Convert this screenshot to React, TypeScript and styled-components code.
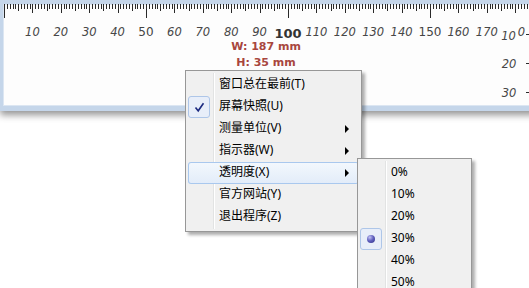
import React from "react";
import styled, { createGlobalStyle, css } from "styled-components";

const Global = createGlobalStyle`
  html, body { margin: 0; padding: 0; background: #ffffff; overflow: hidden; }
  #root { width: 529px; height: 288px; }
`;

const Page = styled.div`
  position: relative;
  width: 529px;
  height: 288px;
  overflow: hidden;
  background: #ffffff;
`;

const RulerWindow = styled.div`
  position: relative;
  width: 548px;
  height: 111px;
  box-sizing: border-box;
  border-style: solid;
  border-color: #c5d6ea;
  border-width: 4px 3px 5px 3px;
  background: #fdfdfd;
  box-shadow: inset 0 0 0 1px #dce6f2, 0 4px 7px rgba(0, 0, 0, 0.42);
`;

const RulerCanvas = styled.svg`
  display: block;
  width: 542px;
  height: 102px;
`;

const Readout = styled.div`
  position: absolute;
  left: 263px;
  top: 35px;
  transform: translateX(-50%);
  display: flex;
  flex-direction: column;
  align-items: center;
  font-family: "DejaVu Sans", Verdana, sans-serif;
  font-weight: bold;
  font-size: 11px;
  line-height: 16px;
  color: #a8463d;
  white-space: nowrap;
`;

const Menu = styled.div<{ $left: number; $top: number; $width: number }>`
  position: absolute;
  left: ${(p) => p.$left}px;
  top: ${(p) => p.$top}px;
  width: ${(p) => p.$width}px;
  box-sizing: border-box;
  padding: 3px 2px;
  display: flex;
  flex-direction: column;
  background: #f0f0f0;
  border: 1px solid #979797;
  box-shadow: 3px 3px 3px rgba(0, 0, 0, 0.32);
  font-family: "Noto Sans", "Noto Sans CJK SC", sans-serif;
  font-size: 12px;
  color: #000;

  &::before {
    content: "";
    position: absolute;
    top: 2px;
    bottom: 2px;
    left: 27px;
    width: 1px;
    background: #e2e3e3;
    box-shadow: 1px 0 0 #ffffff;
  }
`;

const Item = styled.div<{ $hover?: boolean }>`
  position: relative;
  display: flex;
  align-items: center;
  height: 22px;
  border-radius: 3px;
  ${(p) =>
    p.$hover &&
    css`
      background: linear-gradient(#f3f8fd, #e2ecf9);
      box-shadow: inset 0 0 0 1px #a9c8ee;
    `}
`;

const Marker = styled.span<{ $on?: boolean }>`
  flex: none;
  width: 22px;
  height: 22px;
  box-sizing: border-box;
  display: flex;
  align-items: center;
  justify-content: center;
  border-radius: 3px;
  ${(p) =>
    p.$on &&
    css`
      border: 1px solid #aec6e8;
      background: #e8eef9;
    `}
`;

const Label = styled.span`
  flex: 1;
  margin-left: 9px;
  line-height: 22px;
  white-space: nowrap;
  position: relative;
  top: -1px;
`;

const Arrow = styled.span`
  flex: none;
  margin-right: 10px;
  width: 0;
  height: 0;
  border-top: 4px solid transparent;
  border-bottom: 4px solid transparent;
  border-left: 4px solid #000;
`;

const RadioDot = styled.span`
  width: 8px;
  height: 8px;
  border-radius: 50%;
  background: radial-gradient(circle at 35% 30%, #c4c4f4 0%, #6262c0 45%, #2e2e86 100%);
`;

const CheckMark = () => (
  <svg width="11" height="11" viewBox="0 0 11 11">
    <path d="M1.5 5.5 L4.2 8.8 L9.5 1.2" fill="none" stroke="#1d2b80" strokeWidth="1.6" />
  </svg>
);

const X0 = 4;
const PX = 2.84;

const Ruler = () => {
  const ticks: React.ReactNode[] = [];
  for (let mm = 0; mm <= 190; mm++) {
    const x = Math.round(X0 + mm * PX) + 0.5;
    const len = mm % 50 === 0 ? 13 : mm % 10 === 0 ? 8 : mm % 5 === 0 ? 6 : 4;
    ticks.push(<line key={"t" + mm} x1={x} y1={4} x2={x} y2={5 + len} />);
  }
  const labels: React.ReactNode[] = [];
  for (let n = 10; n <= 170; n += 10) {
    const x = X0 + n * PX;
    if (n === 100) {
      labels.push(
        <text key={n} x={x} y={38} fontWeight="bold" fontSize="13" fill="#333">
          {n}
        </text>
      );
    } else if (n === 50 || n === 150) {
      labels.push(
        <text key={n} x={x} y={36} fontSize="12" fill="#444">
          {n}
        </text>
      );
    } else {
      labels.push(
        <text key={n} x={x} y={36} fontStyle="italic" fontSize="11.5" fill="#474747">
          {n}
        </text>
      );
    }
  }
  const vTicks = [34, 63, 92].map((y) => (
    <line key={"v" + y} x1={526} y1={y + 0.5} x2={530} y2={y + 0.5} />
  ));
  return (
    <RulerCanvas viewBox="0 0 542 102">
      <g transform="translate(-3 -4)">
        <g stroke="#2a2a2a" strokeWidth="1">{ticks}</g>
        <g fontFamily="'DejaVu Sans', Verdana, sans-serif" textAnchor="middle">
          {labels}
        </g>
        <g stroke="#2a2a2a" strokeWidth="1">{vTicks}</g>
        <g
          fontFamily="'DejaVu Sans', Verdana, sans-serif"
          fontStyle="italic"
          fontSize="11.5"
          fill="#474747"
          textAnchor="middle"
        >
          <text x={508.5} y={40}>10</text>
          <text x={521.5} y={36}>0</text>
          <text x={509} y={68}>20</text>
          <text x={509} y={97}>30</text>
        </g>
      </g>
    </RulerCanvas>
  );
};

type MainItem = { label: string; checked?: boolean; sub?: boolean; hover?: boolean };

const mainItems: MainItem[] = [
  { label: "窗口总在最前(T)" },
  { label: "屏幕快照(U)", checked: true },
  { label: "测量单位(V)", sub: true },
  { label: "指示器(W)", sub: true },
  { label: "透明度(X)", sub: true, hover: true },
  { label: "官方网站(Y)" },
  { label: "退出程序(Z)" },
];

const opacityItems = ["0%", "10%", "20%", "30%", "40%", "50%"];

export default function App() {
  return (
    <Page>
      <Global />
      <RulerWindow>
        <Ruler />
        <Readout>
          <span>W: 187 mm</span>
          <span>H: 35 mm</span>
        </Readout>
      </RulerWindow>

      <Menu $left={185} $top={70} $width={177}>
        {mainItems.map((it) => (
          <Item key={it.label} $hover={it.hover}>
            <Marker $on={it.checked}>{it.checked && <CheckMark />}</Marker>
            <Label>{it.label}</Label>
            {it.sub && <Arrow />}
          </Item>
        ))}
      </Menu>

      <Menu $left={357} $top={158} $width={115}>
        {opacityItems.map((p) => (
          <Item key={p}>
            <Marker $on={p === "30%"}>{p === "30%" && <RadioDot />}</Marker>
            <Label>{p}</Label>
          </Item>
        ))}
      </Menu>
    </Page>
  );
}
